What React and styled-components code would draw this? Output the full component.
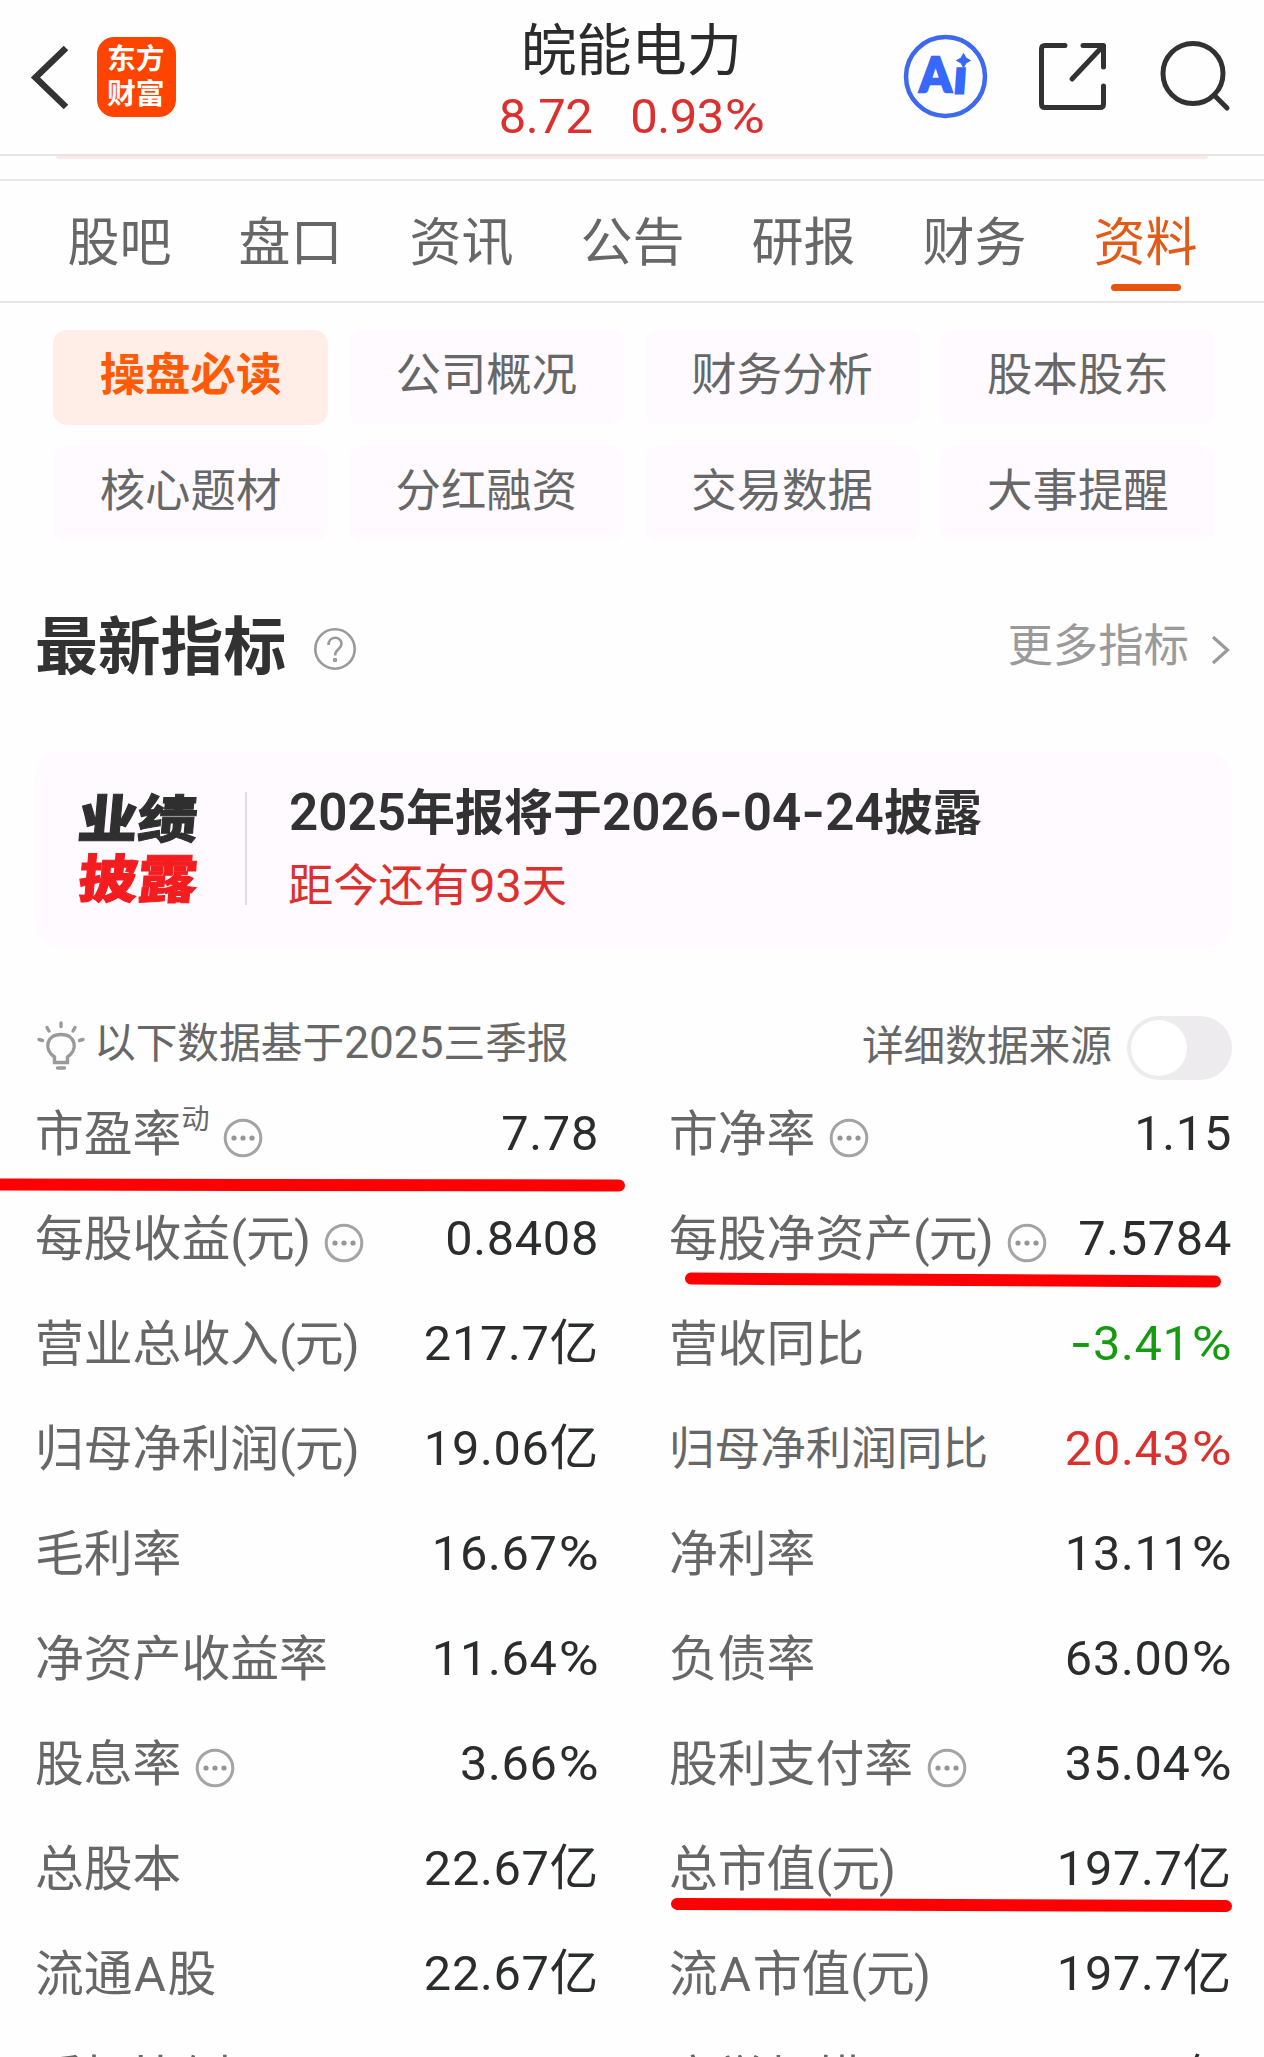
import styled, { createGlobalStyle, css } from 'styled-components';

const GlobalStyle = createGlobalStyle`
  * {
    box-sizing: border-box;
  }
  body {
    margin: 0;
    background: #fefefe;
    font-family: Roboto, 'Noto Sans CJK SC', sans-serif;
    color: #666766;
  }
`;

const Page = styled.main`
  width: 1264px;
  height: 2057px;
  overflow: hidden;
  background: #fefefe;
`;

const Header = styled.header`
  display: grid;
  grid-template-columns: 400px 463px 1fr;
  height: 156px;
  border-bottom: 2px solid #e6e4e4;
`;
const HeaderLeft = styled.div`
  display: flex;
  align-items: flex-start;
  padding: 37px 0 0 28px;
`;
const BackIcon = styled.svg`
  width: 44px;
  height: 80px;
  margin-right: 25px;
`;
const Logo = styled.div`
  width: 79px;
  height: 80px;
  padding: 5px 0 0 10px;
  border-radius: 17px;
  background: #ff4400;
  color: #fff;
  font-size: 28.8px;
  font-weight: 700;
  line-height: 34.5px;
  white-space: nowrap;
`;
const StockTitle = styled.div`
  text-align: center;
  white-space: nowrap;

  h1 {
    margin: 20px 0 0;
    color: #2b2b2b;
    font-size: 55.3px;
    font-weight: 400;
    line-height: 64px;
  }
`;
const Quote = styled.div`
  display: flex;
  justify-content: center;
  gap: 38px;
  margin-top: 1px;
  color: #db3030;
  font-size: 49px;
  letter-spacing: -0.5px;
  line-height: 64px;
`;
const HeaderActions = styled.div`
  display: flex;
  padding: 32px 0 0 38px;
`;
const ActionIcon = styled.svg`
  width: ${({ $width }) => $width}px;
  height: 90px;
  margin-right: ${({ $gap }) => $gap || 0}px;
`;

const BannerEdge = styled.div`
  height: 23px;

  &::before {
    content: '';
    display: block;
    height: 3px;
    margin: 0 56px;
    border-radius: 0 0 16px 16px;
    background: #fbeae8;
  }
`;

const Tabs = styled.nav`
  display: flex;
  height: 124px;
  padding: 0 33px 0 34px;
  border-top: 2px solid #e8e8e8;
  border-bottom: 2px solid #e6e6e6;
`;
const Tab = styled.div`
  display: flex;
  flex-direction: column;
  align-items: center;
  width: 171px;
  padding-top: 33px;
  font-size: 52px;
  line-height: 60px;
  color: ${({ $active }) => ($active ? '#e35a17' : '#666766')};

  ${({ $active }) =>
    $active &&
    css`
      &::after {
        content: '';
        width: 70px;
        height: 7px;
        margin-top: 10px;
        border-radius: 4px;
        background: #e8530e;
      }
    `}
`;

const ChipGrid = styled.div`
  display: grid;
  grid-template-columns: repeat(4, 275px);
  grid-auto-rows: 95px;
  gap: 21px 20.8px;
  padding: 27px 0 0 53px;
`;
const Chip = styled.div`
  padding-top: 15px;
  border-radius: 14px;
  background: ${({ $active }) => ($active ? '#ffeee7' : '#fefaff')};
  color: ${({ $active }) => ($active ? '#ff5a05' : '#666766')};
  font-size: 45.4px;
  font-weight: ${({ $active }) => ($active ? 700 : 400)};
  line-height: 62px;
  text-align: center;
`;

const SectionHead = styled.div`
  display: flex;
  align-items: center;
  height: 80px;
  margin: 67px 32px 0 35px;

  h2 {
    margin: 0;
    color: #323232;
    font-size: 62.8px;
    font-weight: 700;
    line-height: 80px;
  }
`;
const HelpIcon = styled.svg`
  width: 44px;
  height: 44px;
  margin: 2px 0 0 27px;
`;
const MoreLink = styled.div`
  display: flex;
  align-items: center;
  margin-left: auto;
  color: #9b9a9b;
  font-size: 45.4px;
  line-height: 64px;

  span {
    margin-top: -2px;
  }
  svg {
    width: 22px;
    height: 32px;
    margin: 4px 0 0 21px;
  }
`;

const NoticeCard = styled.section`
  display: flex;
  align-items: flex-start;
  height: 196px;
  margin: 63px 32px 0 35px;
  padding-top: 41px;
  border-radius: 26px;
  background: #fefaff;
`;
const NoticeLogo = styled.div`
  width: 210px;
  margin-top: -1px;
  padding-left: 43px;
  font-size: 52px;
  font-weight: 900;
  line-height: 60px;
  white-space: nowrap;

  div {
    width: 104px;
    transform: skewX(-5deg) scaleX(1.15);
    transform-origin: 0 50%;
    color: #2f2f2f;
    -webkit-text-stroke: 1px currentColor;
  }
  div:last-child {
    color: #f31d20;
  }
`;
const NoticeBody = styled.div`
  height: 113px;
  padding-left: 42px;
  border-left: 2px solid #dfdde4;
  white-space: nowrap;
`;
const NoticeTitle = styled.div`
  margin-top: -12px;
  color: #323232;
  font-size: 49px;
  font-weight: 600;
  line-height: 62px;
`;
const NoticeSub = styled.div`
  margin: 10px 0 0 -1px;
  color: #dc302e;
  font-size: 45.3px;
  line-height: 62px;
`;

const HintRow = styled.div`
  display: flex;
  align-items: center;
  height: 64px;
  margin: 69px 32px 0 36px;
  font-size: 41.7px;
  line-height: 60px;
  white-space: nowrap;

  & > svg {
    width: 50px;
    height: 52px;
    margin: -5px 8px 0 0;
  }
`;
const HintText = styled.span`
  margin-top: -9px;
`;
const SourceText = styled.span`
  margin: -2px 15px 0 auto;
`;
const Toggle = styled.div`
  width: 105px;
  height: 64px;
  padding: 4px;
  border-radius: 32px;
  background: #eeebef;

  &::before {
    content: '';
    display: block;
    width: 56px;
    height: 56px;
    border-radius: 50%;
    background: #fff;
  }
`;

const Metrics = styled.section`
  display: grid;
  grid-template-columns: 564px 563px;
  grid-auto-rows: 105px;
  column-gap: 70px;
  padding: 1px 0 0 35px;
`;
const Metric = styled.div`
  position: relative;
  display: flex;
  align-items: center;
  font-size: 48.7px;
  line-height: 64px;
  white-space: nowrap;
`;
const Label = styled.span`
  margin-top: 2px;
  font-size: ${({ $small }) => ($small ? 45.6 : 48.8)}px;
`;
const Unit = styled.span`
  letter-spacing: -0.9px;
`;
const Latin = styled.span`
  padding: 0 1.5px;
`;
const Sup = styled.span`
  align-self: flex-start;
  margin-top: 19px;
  font-size: 28px;
  line-height: 40px;
`;
const MoreDots = styled.svg`
  width: 40px;
  height: 40px;
  margin: 9px 0 0 14px;
`;
const Value = styled.span`
  margin-left: auto;
  color: ${({ $tone }) =>
    ({ up: '#dc302e', down: '#159a10' })[$tone] || '#2b2d2c'};
  letter-spacing: 0.7px;
`;

/* Digits next to Chinese text run slightly larger than the text itself */
const Num = styled.span`
  font-size: ${({ $size }) => $size || 1.06}em;
`;
const Dash = styled.span`
  font-family: Inter, sans-serif;
`;
const Percent = styled.span`
  display: inline-block;
  margin-left: 5px;
  transform: scaleX(1.12);
  transform-origin: 100% 50%;
`;

/* Marker strokes drawn over the rows */
const Marker = styled.div`
  position: absolute;
  left: ${({ $left }) => $left}px;
  top: ${({ $top }) => $top}px;
  width: ${({ $width }) => $width}px;
  height: 11.5px;
  border-radius: 6px;
  background: #fe0000;
  transform: rotate(${({ $tilt }) => $tilt}deg);
`;

const tabs = ['股吧', '盘口', '资讯', '公告', '研报', '财务', '资料'];
const chips = [
  '操盘必读',
  '公司概况',
  '财务分析',
  '股本股东',
  '核心题材',
  '分红融资',
  '交易数据',
  '大事提醒',
];
const metrics = [
  {
    label: '市盈率',
    sup: '动',
    info: true,
    value: '7.78',
    marker: { $left: -45, $top: 97.5, $width: 635, $tilt: 0.09 },
  },
  { label: '市净率', info: true, value: '1.15' },
  { label: '每股收益(元)', info: true, value: '0.8408' },
  {
    label: '每股净资产(元)',
    info: true,
    value: '7.5784',
    marker: { $left: 15.5, $top: 87.5, $width: 536, $tilt: 0.32 },
  },
  { label: '营业总收入(元)', value: '217.7亿' },
  { label: '营收同比', value: '-3.41%', tone: 'down' },
  { label: '归母净利润(元)', value: '19.06亿' },
  { label: '归母净利润同比', value: '20.43%', tone: 'up', small: true },
  { label: '毛利率', value: '16.67%' },
  { label: '净利率', value: '13.11%' },
  { label: '净资产收益率', value: '11.64%' },
  { label: '负债率', value: '63.00%' },
  { label: '股息率', info: true, value: '3.66%' },
  { label: '股利支付率', info: true, value: '35.04%' },
  { label: '总股本', value: '22.67亿' },
  {
    label: '总市值(元)',
    value: '197.7亿',
    marker: { $left: 2, $top: 83, $width: 561, $tilt: 0.23 },
  },
  { label: '流通A股', value: '22.67亿' },
  { label: '流A市值(元)', value: '197.7亿' },
  { label: '质押比例', value: '' },
  { label: '商誉规模', value: '亿' },
];

const LabelText = ({ text }) =>
  text.split(/(\(元\)|A)/).map((part) => {
    if (part === '(元)') return <Unit key={part}>{part}</Unit>;
    if (part === 'A') return <Latin key={part}>{part}</Latin>;
    return part;
  });

const Figure = ({ text }) => (
  <>
    {text.startsWith('-') && <Dash>-</Dash>}
    {text.replace(/[-%]/g, '')}
    {text.endsWith('%') && <Percent>%</Percent>}
  </>
);

const MetricCell = ({ data }) => (
  <Metric>
    <Label $small={data.small}>
      <LabelText text={data.label} />
    </Label>
    {data.sup && <Sup>{data.sup}</Sup>}
    {data.info && (
      <MoreDots viewBox="0 0 40 40">
        <circle cx="20" cy="20" r="17.8" fill="none" stroke="#a5a3a5" strokeWidth="3" />
        <g fill="#969496">
          <circle cx="11" cy="20" r="2.6" />
          <circle cx="20" cy="20" r="2.6" />
          <circle cx="29" cy="20" r="2.6" />
        </g>
      </MoreDots>
    )}
    <Value $tone={data.tone}>
      <Figure text={data.value} />
    </Value>
    {data.marker && <Marker {...data.marker} />}
  </Metric>
);

const TopBar = () => (
  <Header>
    <HeaderLeft>
      <BackIcon viewBox="0 0 44 80" fill="none" stroke="#333" strokeWidth="6.5">
        <path d="M38 11 L7.5 40.5 L38 70" />
      </BackIcon>
      <Logo>
        <div>东方</div>
        <div>财富</div>
      </Logo>
    </HeaderLeft>
    <StockTitle>
      <h1>皖能电力</h1>
      <Quote>
        <span>8.72</span>
        <span>
          <Figure text="0.93%" />
        </span>
      </Quote>
    </StockTitle>
    <HeaderActions>
      <ActionIcon viewBox="0 0 90 90" $width={90} $gap={46}>
        <circle cx="44.5" cy="44.5" r="39.5" fill="none" stroke="#3d69f2" strokeWidth="4.5" />
        <g fill="#3668fb" stroke="#3668fb" fontFamily="Lato" fontWeight="900" fontSize="47">
          <text x="18.5" y="59.5" strokeWidth="2.5" textLength="32" lengthAdjust="spacingAndGlyphs">
            A
          </text>
          <text x="56.5" y="61" strokeWidth="3" transform="skewX(-4)">
            ı
          </text>
          <path
            d="M62.5 21.5 L65 26 L69.5 28.5 L65 31 L62.5 35.5 L60 31 L55.5 28.5 L60 26Z"
            strokeWidth="1"
          />
        </g>
      </ActionIcon>
      <ActionIcon
        viewBox="0 0 76 90"
        $width={76}
        $gap={44}
        fill="none"
        stroke="#323232"
        strokeWidth="5"
        strokeLinecap="round"
        strokeLinejoin="round"
      >
        <path d="M28 13.5 H8 Q4.5 13.5 4.5 17 V72 Q4.5 75.5 8 75.5 H63 Q66.5 75.5 66.5 72 V54" />
        <path d="M46 13.5 H66.5 V35 M66 14 L35 47" />
      </ActionIcon>
      <ActionIcon
        viewBox="0 0 76 90"
        $width={76}
        fill="none"
        stroke="#323232"
        strokeWidth="5"
        strokeLinecap="round"
      >
        <circle cx="36" cy="41.5" r="30" />
        <path d="M57 63 L70 76" />
      </ActionIcon>
    </HeaderActions>
  </Header>
);

const App = () => {
  return (
    <>
      <GlobalStyle />
      <Page>
        <TopBar />
        <BannerEdge />
        <Tabs>
          {tabs.map((tab) => (
            <Tab key={tab} $active={tab === '资料'}>
              {tab}
            </Tab>
          ))}
        </Tabs>
        <ChipGrid>
          {chips.map((chip, index) => (
            <Chip key={chip} $active={index === 0}>
              {chip}
            </Chip>
          ))}
        </ChipGrid>
        <SectionHead>
          <h2>最新指标</h2>
          <HelpIcon viewBox="0 0 44 44" fill="none" stroke="#9b9a9b" strokeWidth="2.6">
            <circle cx="22" cy="22" r="19.7" />
            <path d="M15.5 18 C15.5 8.5 28.5 8.5 28.5 17 C28.5 22 22 22 22 28.5" />
            <circle cx="22" cy="33" r="1" />
          </HelpIcon>
          <MoreLink>
            <span>更多指标</span>
            <svg viewBox="0 0 22 32" fill="none" stroke="#9b9a9b" strokeWidth="3.2">
              <path d="M3 3 L17.5 16 L3 29" />
            </svg>
          </MoreLink>
        </SectionHead>
        <NoticeCard>
          <NoticeLogo>
            <div>业绩</div>
            <div>披露</div>
          </NoticeLogo>
          <NoticeBody>
            <NoticeTitle>
              <Num $size={1.045}>2025</Num>年报将于
              <Num $size={1.045}>
                2026<Dash>-</Dash>04<Dash>-</Dash>24
              </Num>
              披露
            </NoticeTitle>
            <NoticeSub>
              距今还有<Num $size={1.03}>93</Num>天
            </NoticeSub>
          </NoticeBody>
        </NoticeCard>
        <HintRow>
          <svg viewBox="0 0 50 52" fill="none" stroke="#9b999b" strokeWidth="3.4" strokeLinecap="round">
            <path d="M18.5 40 V37 C8 30 9.5 14.5 25 14.5 C40.5 14.5 42 30 31.5 37 V42.5 H18.5 V39" />
            <path d="M21.5 48 H28.5" />
            <path d="M25 3 V6.5 M11 7.5 L13 11 M39 7.5 L37 11 M3 19.5 L6.5 20.5 M47 19.5 L43.5 20.5" />
          </svg>
          <HintText>
            以下数据基于<Num>2025</Num>三季报
          </HintText>
          <SourceText>详细数据来源</SourceText>
          <Toggle />
        </HintRow>
        <Metrics>
          {metrics.map((item) => (
            <MetricCell key={item.label} data={item} />
          ))}
        </Metrics>
      </Page>
    </>
  );
};

export default App;
